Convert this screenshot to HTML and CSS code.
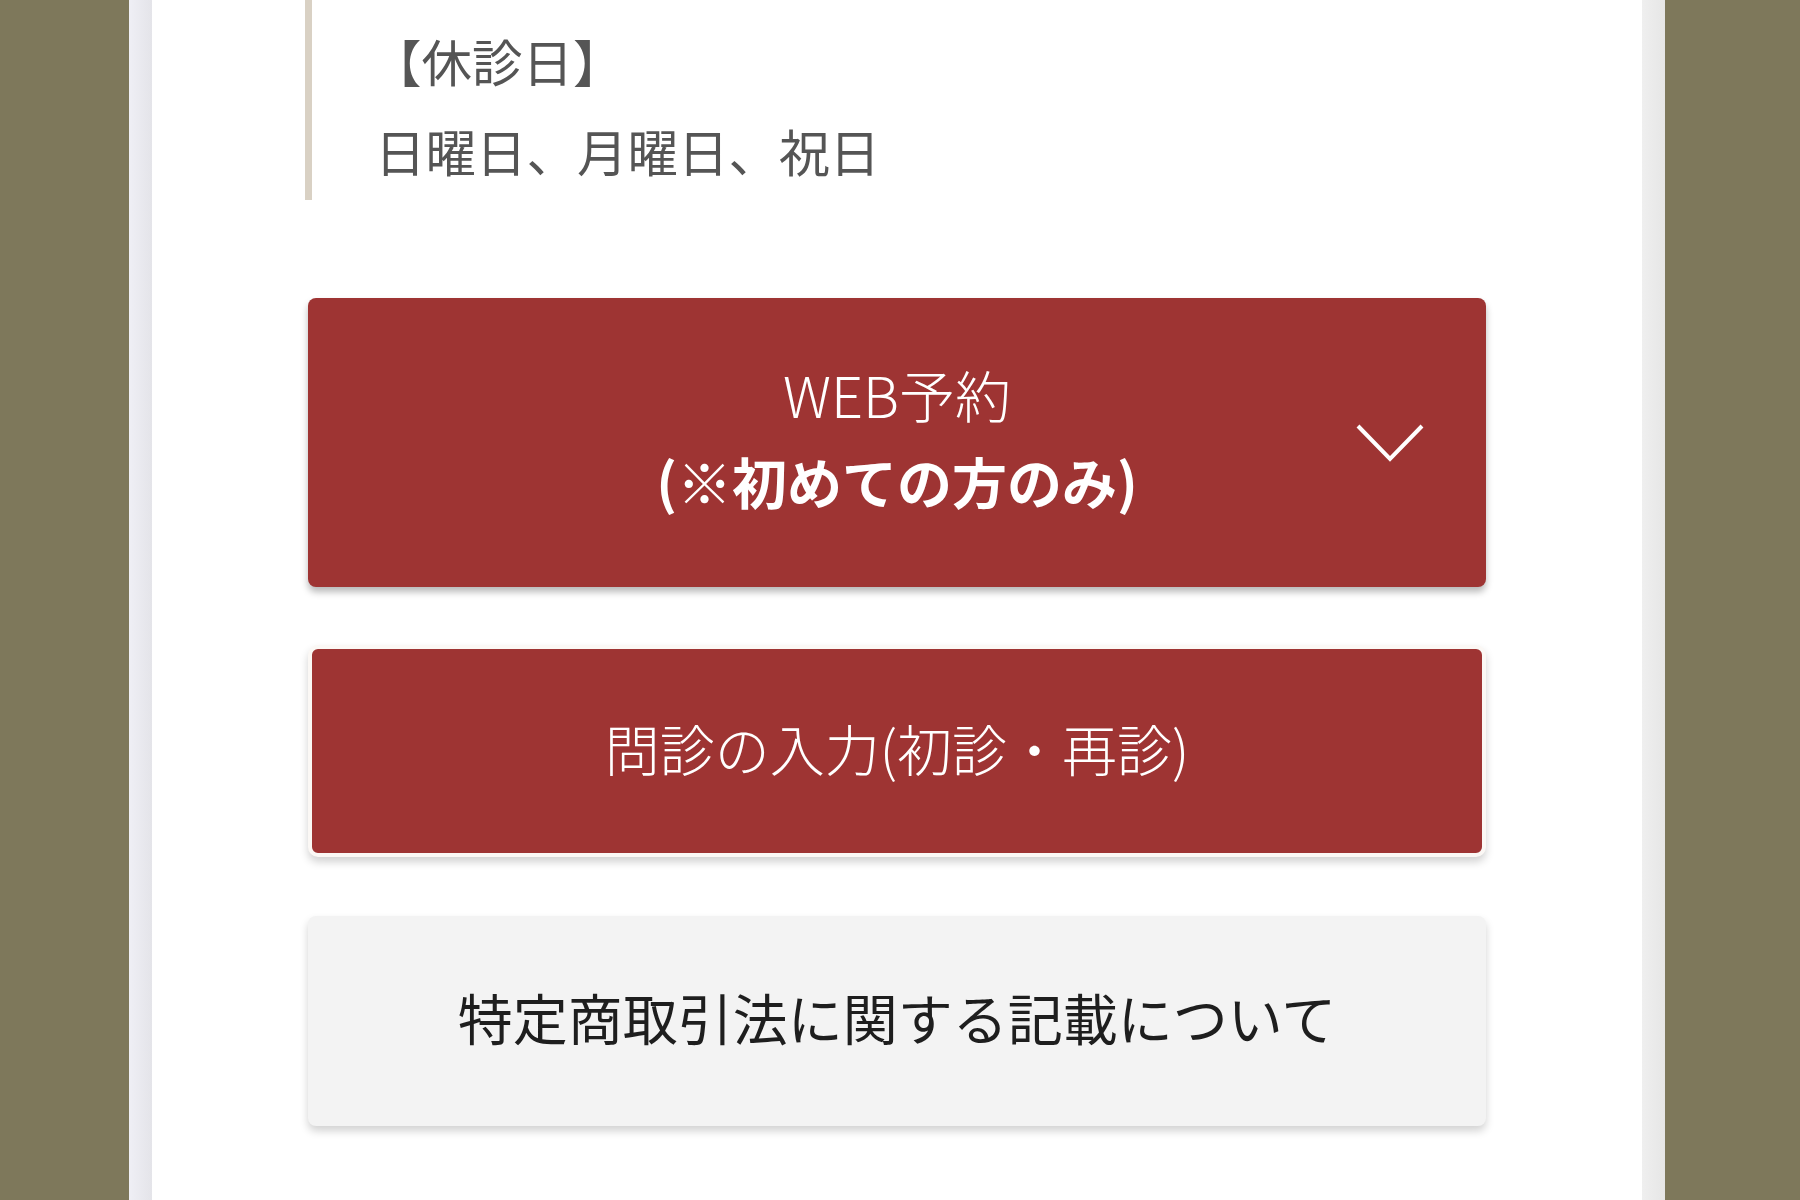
FILE: index.html
```html
<!DOCTYPE html>
<html lang="ja">
<head>
<meta charset="utf-8">
<meta name="viewport" content="width=device-width, initial-scale=1">
<title>休診日・WEB予約</title>
<link rel="stylesheet" href="styles.css">
</head>
<body>
<div class="frame">
	<div class="card">
		<div class="holiday">
			<p class="holiday-title">【休診日】</p>
			<p class="holiday-days">日曜日、月曜日、祝日</p>
		</div>

		<a class="btn btn-red btn-web" href="#">
			<span class="btn-line">WEB予約</span>
			<span class="btn-line btn-bold">(※初めての方のみ)</span>
			<svg class="chevron" width="68" height="38" viewBox="0 0 68 38"><polyline points="2,2 34,35 66,2" fill="none" stroke="#fff" stroke-width="4"/></svg>
		</a>

		<a class="btn btn-red btn-form" href="#">問診の入力(初診・再診)</a>

		<a class="btn btn-gray" href="#">特定商取引法に関する記載について</a>
	</div>
</div>
</body>
</html>
```

FILE: styles.css
```css
*{box-sizing:border-box;}
html,body{margin:0;padding:0;}
body{background:#7e785b;font-family:"Noto Sans CJK JP","Noto Sans",sans-serif;height:1200px;overflow:hidden;}

/*外枠*/
.frame{width:1536px;margin-left:129px;padding:0 23px;height:1200px;background:linear-gradient(to right,#efeff5 0,#e4e4e9 23px,#efefef 1513px,#e6e6e6 1536px);}
.card{background:#fff;height:100%;padding:0 156px;}

/*休診日*/
.holiday{margin-left:-3px;border-left:7px solid #d9d1c4;padding:15px 0 0 63px;height:200px;color:#555;font-size:50.5px;line-height:90px;}
.holiday p{margin:0;white-space:nowrap;}
.holiday-title{margin-left:-4px !important;}

/*ボタン*/
.btn{display:flex;flex-direction:column;align-items:center;justify-content:center;text-decoration:none;border-radius:8px;font-size:55px;white-space:nowrap;position:relative;}
.btn-red{background:#9e3433;color:#fff;}
.btn-web{margin-top:98px;height:289px;padding-bottom:12px;box-shadow:0 5px 7px rgba(0,0,0,0.28);line-height:87px;}
.btn-line{display:block;font-weight:300;}
.btn-line:first-child{font-size:56px;}
.btn-bold{font-weight:700;}
.btn-form{margin-top:58px;height:212px;padding-bottom:8px;border:4px solid #fbf8f5;border-radius:10px;box-shadow:0 5px 8px rgba(0,0,0,0.18);font-weight:300;}
.btn-gray{margin-top:59px;height:210px;padding-bottom:10px;background:#f3f3f3;color:#1e1e1e;box-shadow:0 5px 8px rgba(0,0,0,0.18);}

.chevron{position:absolute;right:62px;top:50%;margin-top:-19px;}
```
